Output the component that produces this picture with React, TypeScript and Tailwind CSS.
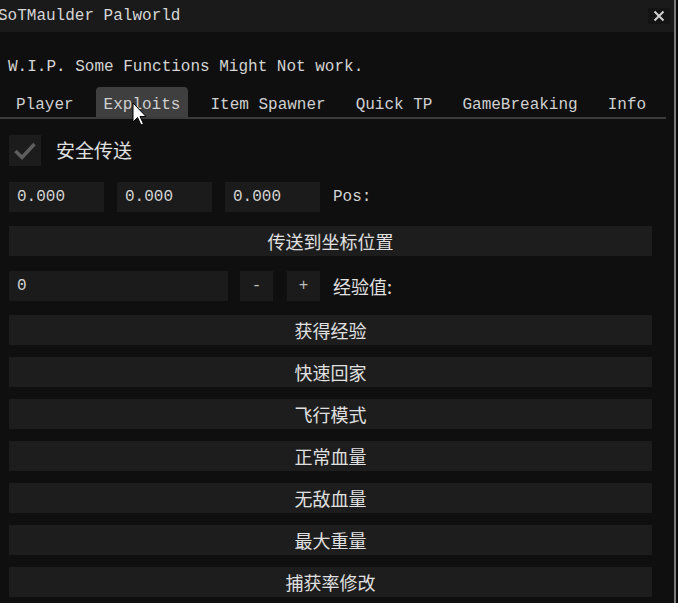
import React from "react";

const mono = "font-['Liberation_Mono','Noto_Sans_CJK_SC',monospace]";
const cjk = "font-['Noto_Sans_CJK_SC','Liberation_Sans',sans-serif]";

function Btn({ label, className = "" }: { label: string; className?: string }) {
  return (
    <div
      className={`h-[30px] w-[643px] bg-[#1d1d1d] flex items-center justify-center text-[18px] text-[#e0e0e0] ${cjk} ${className}`}
    >
      {label}
    </div>
  );
}

export default function App() {
  const tabs = ["Player", "Exploits", "Item Spawner", "Quick TP", "GameBreaking", "Info"];
  const buttons = ["获得经验", "快速回家", "飞行模式", "正常血量", "无敌血量", "最大重量", "捕获率修改"];
  return (
    <div className="w-[678px] h-[603px] bg-[#0b0b0b] flex overflow-hidden relative">
      <div className="w-[676px] h-full bg-[#0f0f0f] border-r-2 border-[#7a7a7a] flex flex-col">
        {/* title bar */}
        <div className="h-8 bg-[#1a1a1a] flex items-center justify-between shrink-0">
          <span className={`${mono} text-[16px] text-[#d6d6d6] ml-[-2px] leading-none`}>SoTMaulder Palworld</span>
          <div className="w-[22px] h-[16px] bg-[#141414] mr-[4px] flex items-center justify-center">
            <svg width="12" height="12" viewBox="0 0 12 12">
              <path d="M1.5 1.5 L10.5 10.5 M10.5 1.5 L1.5 10.5" stroke="#d0d0d0" strokeWidth="2" />
            </svg>
          </div>
        </div>

        {/* WIP text */}
        <div className={`${mono} text-[16px] leading-5 text-[#d4d4d4] mt-[25px] pl-[8px]`}>
          W.I.P. Some Functions Might Not work.
        </div>

        {/* tabs */}
        <div className="mt-[10px] flex gap-[14px] pl-[8px]">
          {tabs.map((t) => (
            <div
              key={t}
              className={`h-[30px] px-2 pt-[5px] flex items-center ${mono} text-[16px] text-[#d0d0d0] rounded-t-[4px] ${
                t === "Exploits" ? "bg-[#3f3f3f]" : ""
              }`}
            >
              {t}
            </div>
          ))}
        </div>
        <div className="h-[2px] w-[666px] bg-[#3b3b3b]" />

        {/* content */}
        <div className="pl-[9px] flex flex-col">
          <div className="mt-[16px] flex items-center">
            <div className="w-8 h-[31px] bg-[#1c1c1c] flex items-center justify-center">
              <svg width="24" height="20" viewBox="0 0 24 20">
                <path d="M2.5 10 L9 16.5 L21.5 3" fill="none" stroke="#5e5e5e" strokeWidth="3.5" />
              </svg>
            </div>
            <span className={`${cjk} text-[19px] text-[#e0e0e0] ml-[15px]`}>安全传送</span>
          </div>

          <div className="mt-[16px] flex items-center gap-[13px]">
            {["0.000", "0.000", "0.000"].map((v, i) => (
              <div
                key={i}
                className={`h-[30px] w-[95px] bg-[#1b1b1b] flex items-center pl-[8px] ${mono} text-[16px] text-[#d4d4d4]`}
              >
                {v}
              </div>
            ))}
            <span className={`${mono} text-[16px] text-[#d4d4d4]`}>Pos:</span>
          </div>

          <Btn label="传送到坐标位置" className="mt-[14px]" />

          <div className="mt-[15px] flex items-center">
            <div className={`h-[30px] w-[219px] bg-[#1b1b1b] flex items-center pl-[8px] ${mono} text-[16px] text-[#d4d4d4]`}>
              0
            </div>
            <div className={`ml-[12px] h-[30px] w-[33px] bg-[#1b1b1b] flex items-center justify-center ${mono} text-[16px] text-[#bdbdbd]`}>
              -
            </div>
            <div className={`ml-[14px] h-[30px] w-[33px] bg-[#1b1b1b] flex items-center justify-center ${mono} text-[16px] text-[#bdbdbd]`}>
              +
            </div>
            <span className={`${cjk} text-[18px] text-[#e0e0e0] ml-[13px]`}>经验值:</span>
          </div>

          <div className="mt-[14px] flex flex-col gap-[12px]">
            {buttons.map((b) => (
              <Btn key={b} label={b} />
            ))}
          </div>
        </div>
      </div>

      {/* mouse cursor */}
      <svg className="absolute left-[132px] top-[102px]" width="16" height="26" viewBox="0 0 16 26">
        <path d="M1 1 L1 20 L5.5 15.5 L9 23 L11.5 22 L8 14.5 L14 14.5 Z" fill="#ffffff" stroke="#000000" strokeWidth="1" />
      </svg>
    </div>
  );
}
